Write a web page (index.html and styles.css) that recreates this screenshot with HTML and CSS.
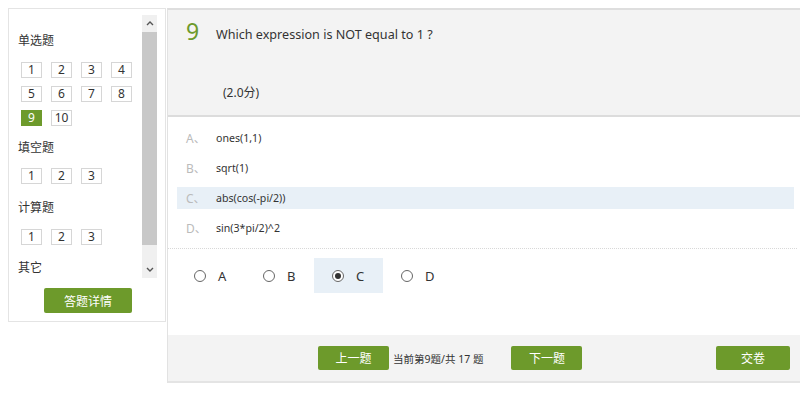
FILE: index.html
```html
<!DOCTYPE html>
<html>
<head>
<meta charset="utf-8">
<link rel="stylesheet" href="styles.css">
</head>
<body>
<div class="page">
  <aside class="side">
    <div class="side-inner">
      <div class="side-list">
        <div class="grp-title first">单选题</div>
        <div class="nums">
          <span class="num">1</span><span class="num">2</span><span class="num">3</span><span class="num">4</span>
          <span class="num">5</span><span class="num">6</span><span class="num">7</span><span class="num">8</span>
          <span class="num cur">9</span><span class="num">10</span>
        </div>
        <div class="grp-title">填空题</div>
        <div class="nums">
          <span class="num">1</span><span class="num">2</span><span class="num">3</span>
        </div>
        <div class="grp-title wide">计算题</div>
        <div class="nums">
          <span class="num">1</span><span class="num">2</span><span class="num">3</span>
        </div>
        <div class="grp-title wider">其它</div>
      </div>
      <div class="scrollbar">
        <div class="sb-btn"><svg width="8" height="6" viewBox="0 0 8 6"><path d="M1 5 L4 2 L7 5" fill="none" stroke="#555" stroke-width="1.4"/></svg></div>
        <div class="sb-track"><div class="sb-thumb"></div></div>
        <div class="sb-btn"><svg width="8" height="6" viewBox="0 0 8 6"><path d="M1 1 L4 4 L7 1" fill="none" stroke="#555" stroke-width="1.4"/></svg></div>
      </div>
    </div>
    <div class="side-foot"><span class="btn detail">答题详情</span></div>
  </aside>
  <main class="main">
    <div class="q-head">
      <div class="q-line"><span class="q-no">9</span><span class="q-text">Which expression is NOT equal to 1 ?</span></div>
      <div class="q-score">(2.0分)</div>
    </div>
    <div class="opts">
      <div class="opt"><span class="opt-l">A、</span><span class="opt-t">ones(1,1)</span></div>
      <div class="opt"><span class="opt-l">B、</span><span class="opt-t">sqrt(1)</span></div>
      <div class="opt sel"><span class="opt-l">C、</span><span class="opt-t">abs(cos(-pi/2))</span></div>
      <div class="opt"><span class="opt-l">D、</span><span class="opt-t">sin(3*pi/2)^2</span></div>
    </div>
    <div class="answers">
      <label class="ans"><span class="radio"></span>A</label>
      <label class="ans"><span class="radio"></span>B</label>
      <label class="ans on"><span class="radio"><span class="dot"></span></span>C</label>
      <label class="ans"><span class="radio"></span>D</label>
    </div>
    <div class="foot">
      <span class="btn nav">上一题</span>
      <span class="count">当前第9题/共 17 题</span>
      <span class="btn nav next">下一题</span>
      <span class="spacer"></span>
      <span class="btn submit">交卷</span>
    </div>
  </main>
</div>
</body>
</html>
```
FILE: styles.css
```css
* { box-sizing: border-box; }
html, body { margin: 0; padding: 0; background: #fff; }
body { font-family: "Noto Sans", "Noto Sans CJK SC", sans-serif; color: #333; font-size: 12px; }
.page { display: flex; align-items: flex-start; padding-top: 8px; padding-left: 8px; }

.side { width: 158px; height: 314px; border: 1px solid #e4e4e4; background: #fff; display: flex; flex-direction: column; }
.side-inner { display: flex; height: 270px; padding-top: 6px; }
.side-list { flex: 1; padding-left: 9px; overflow: hidden; }
.grp-title { font-size: 12px; color: #333; line-height: 16px; margin-top: 14px; margin-bottom: 12px; }
.grp-title.first { margin-top: 18px; margin-bottom: 13px; }
.grp-title.wide { margin-top: 16px; margin-bottom: 13px; }
.grp-title.wider { margin-top: 15px; }
.nums { display: flex; flex-wrap: wrap; gap: 8px 9px; padding-left: 3px; width: 124px; }
.num { width: 21px; height: 16px; border: 1px solid #d6d6d6; font-size: 12px; line-height: 14px; text-align: center; color: #333; background: #fff; }
.num.cur { background: #6d9a2b; border-color: #6d9a2b; color: #fff; }

.scrollbar { width: 15px; margin-right: 8px; display: flex; flex-direction: column; height: 263px; }
.sb-btn { height: 16px; display: flex; align-items: center; justify-content: center; background: #f0f0f0; }
.sb-track { flex: 1; background: #f0f0f0; display: flex; flex-direction: column; }
.sb-thumb { height: 213px; background: #c8c8c8; margin-top: 1px; }

.side-foot { display: flex; justify-content: center; padding-top: 9px; padding-left: 2px; }
.btn { display: inline-flex; align-items: center; justify-content: center; background: #6d9a2b; color: #fff; font-size: 12px; border-radius: 2px; }
.detail { width: 88px; height: 25px; }

.main { flex: 1; margin-left: 1px; height: 375px; border-left: 1px solid #e2e2e2; border-top: 2px solid #dedede; display: flex; flex-direction: column; }
.q-head { background: #f3f3f3; height: 107px; border-bottom: 2px solid #dcdcdc; padding: 6px 0 0 18px; }
.q-line { display: flex; align-items: baseline; }
.q-no { font-size: 23px; color: #6d9a2b; width: 30px; line-height: 30px; }
.q-text { font-size: 12.6px; color: #333; position: relative; top: -1px; }
.q-score { margin-top: 37px; padding-left: 37px; font-size: 12px; color: #333; }

.opts { padding: 10px 3px 0 9px; border-bottom: 1px dotted #d8d8d8; padding-bottom: 9px; margin: 0 3px 0 0; }
.opt { display: flex; height: 22px; align-items: center; margin-bottom: 8px; padding-left: 9px; }
.opt:last-child { margin-bottom: 0; }
.opt.sel { background: #e8f0f7; }
.opt-l { width: 30px; color: #bbb; font-size: 12px; }
.opt-t { font-size: 10.6px; color: #333; }

.answers { display: flex; padding: 9px 0 0 8px; height: 86px; }
.ans { display: flex; align-items: center; width: 69px; height: 35px; padding-left: 18px; font-size: 13px; color: #333; }
.ans.on { background: #e8f0f7; }
.radio { width: 12px; height: 12px; border: 1px solid #666; border-radius: 50%; margin-right: 12px; display: flex; align-items: center; justify-content: center; background: #fff; }
.dot { width: 6px; height: 6px; border-radius: 50%; background: #333; }

.foot { background: #f3f3f3; height: 48px; border-bottom: 2px solid #e4e4e4; display: flex; align-items: center; padding-left: 150px; padding-right: 10px; }
.nav { width: 71px; height: 24px; }
.count { font-size: 10.5px; color: #333; margin-left: 4px; margin-right: 28px; }
.spacer { flex: 1; }
.submit { width: 74px; height: 24px; }
```
